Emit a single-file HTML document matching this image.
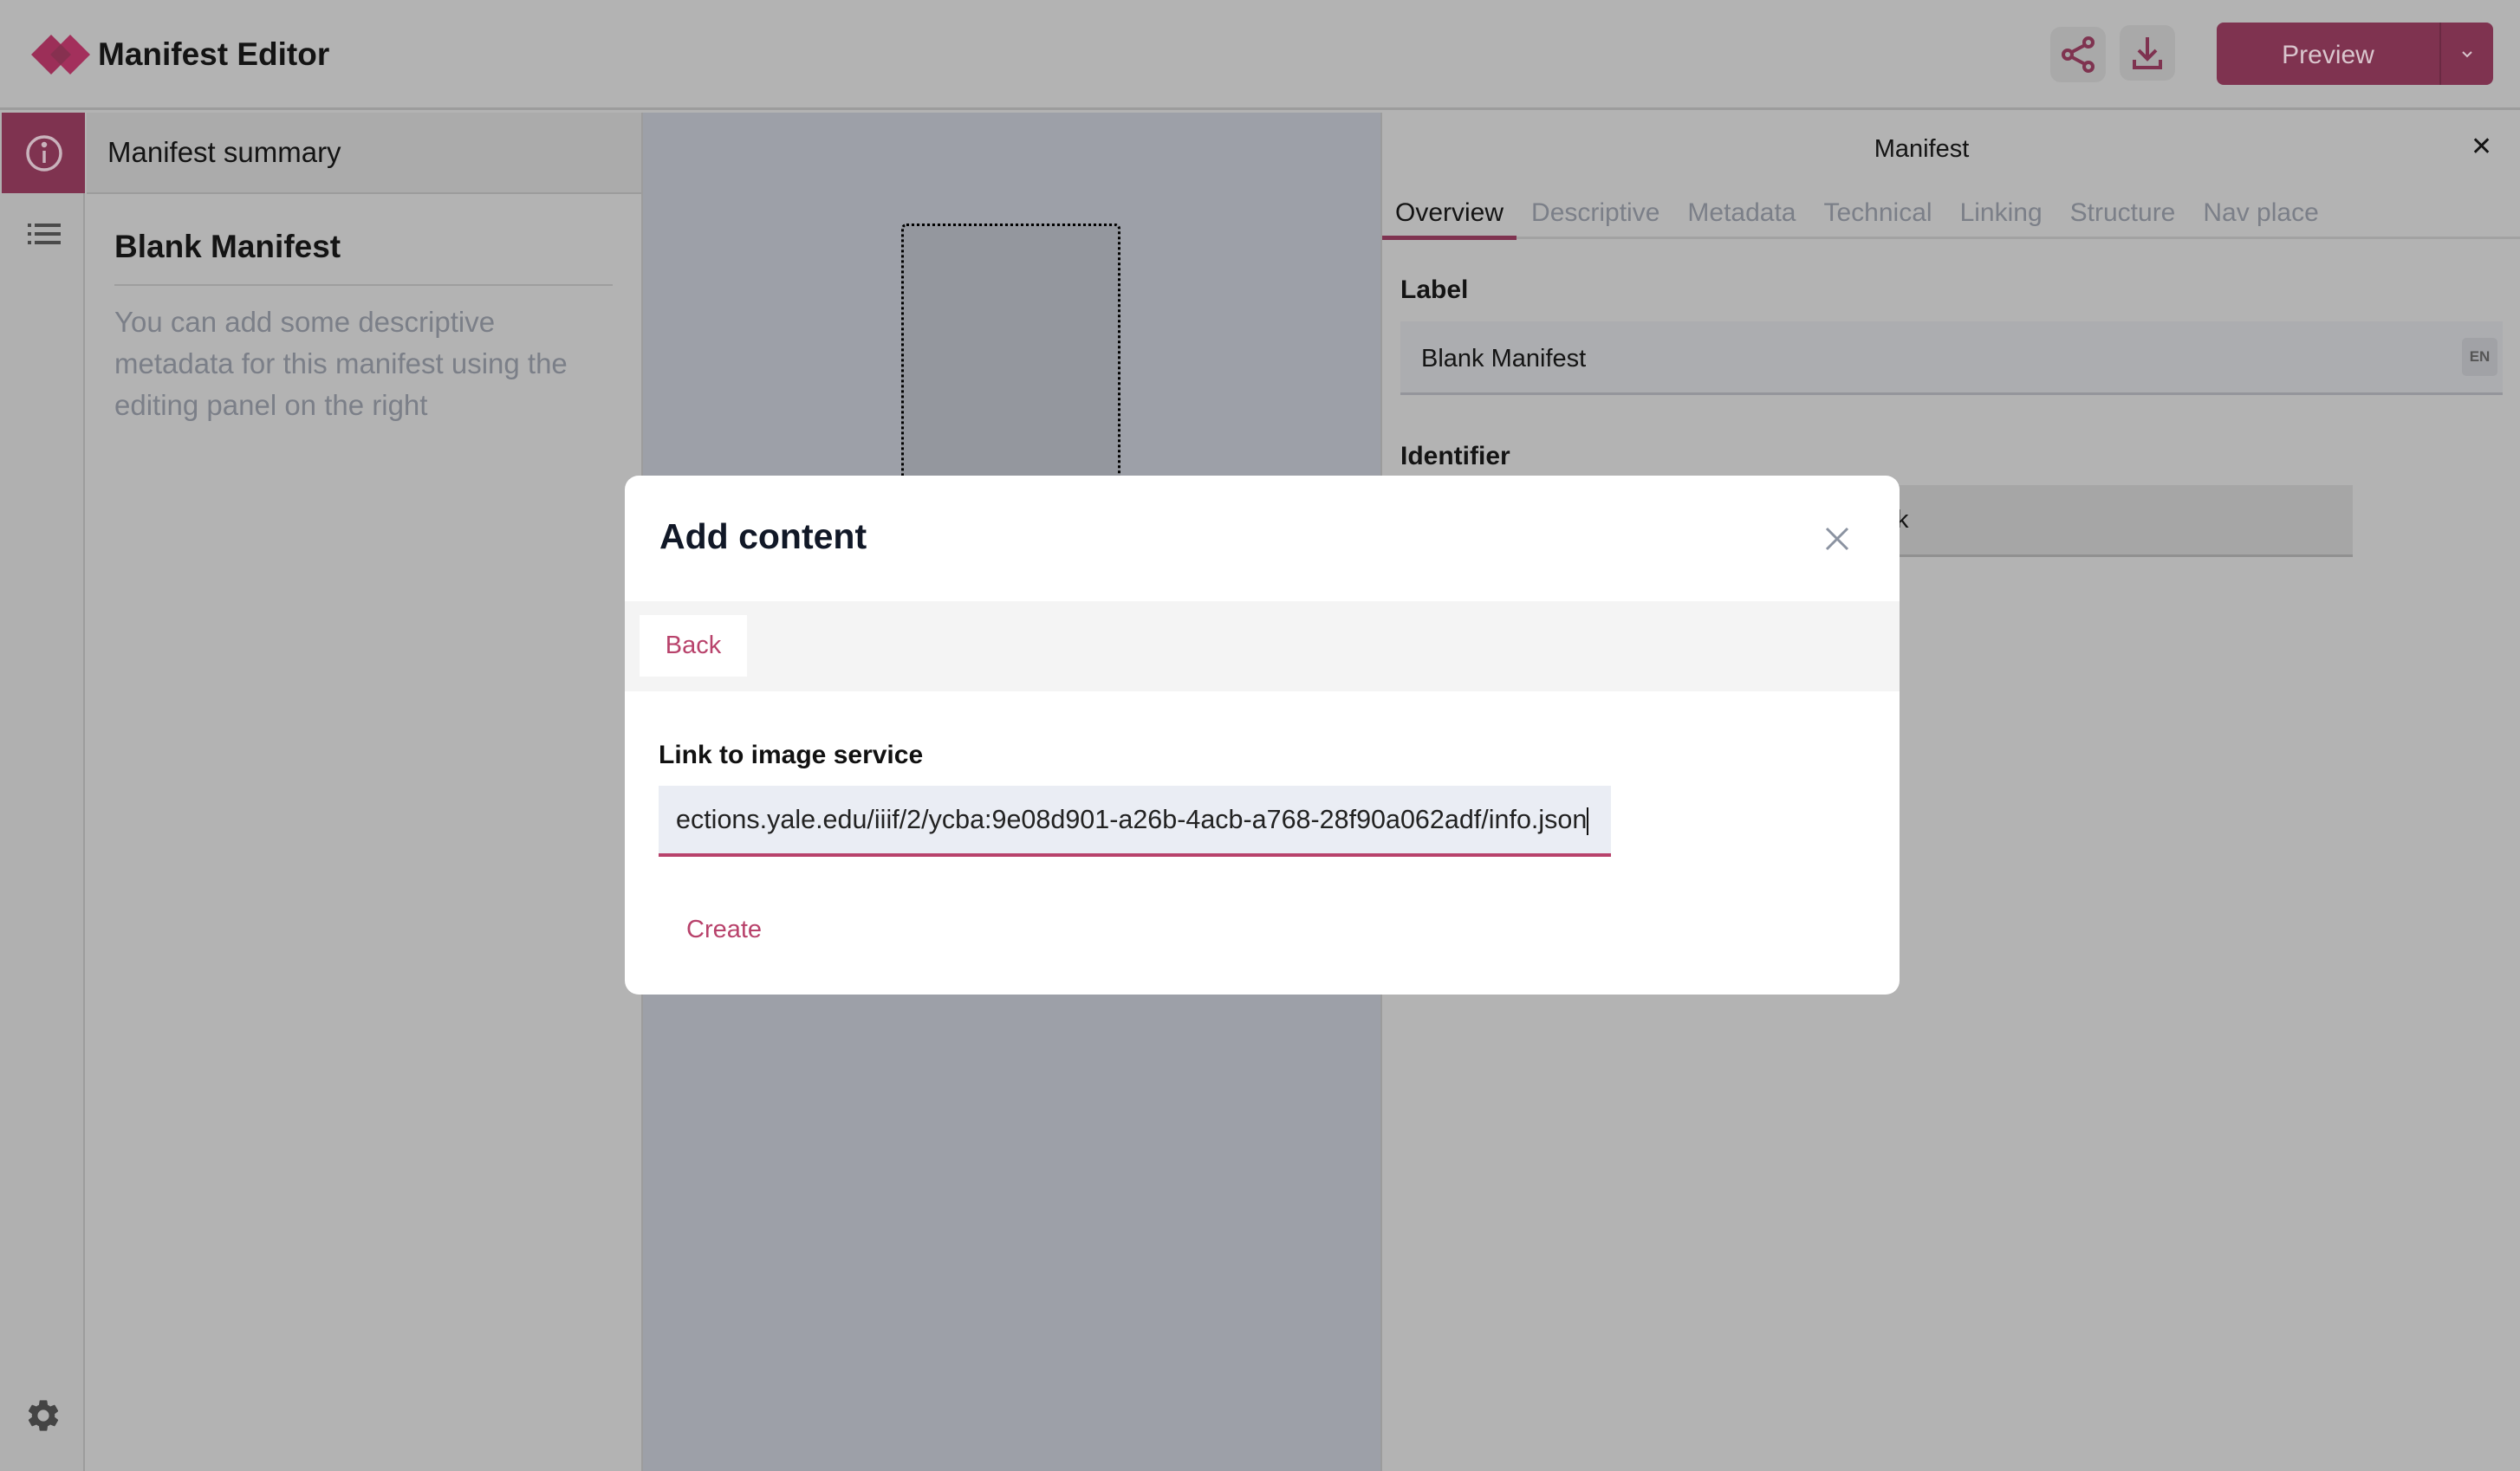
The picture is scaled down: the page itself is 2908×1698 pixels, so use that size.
<!DOCTYPE html>
<html><head><meta charset="utf-8"><style>
*{box-sizing:border-box;margin:0;padding:0}
body{width:2908px;height:1698px;overflow:hidden;background:#b3b3b3;font-family:"Liberation Sans",sans-serif;position:relative}
.a{position:absolute}
</style></head><body>
<!-- header -->
<div class="a" style="left:0;top:0;width:2908px;height:127px;background:#b3b3b3;border-bottom:3px solid #9c9c9c"></div>
<svg class="a" style="left:36px;top:40px" width="68" height="46" viewBox="0 0 68 46">
<polygon points="23,0 46,23 23,46 0,23" fill="#9c2f58"/>
<polygon points="45,0 68,23 45,46 22,23" fill="#a3305c"/>
<polygon points="34,11 46,23 34,35 22,23" fill="#873050"/>
</svg>
<div class="a" style="left:113px;top:42px;font-size:37px;font-weight:bold;color:#141414">Manifest Editor</div>
<div class="a" style="left:2366px;top:31px;width:64px;height:64px;border-radius:12px;background:#a9a9a9"></div>
<svg class="a" style="left:2366px;top:31px" width="64" height="64" viewBox="0 0 64 64" fill="none" stroke="#7f3350" stroke-width="4">
<circle cx="44" cy="18" r="5"/><circle cx="20" cy="32" r="5"/><circle cx="44" cy="46" r="5"/><path d="M25 29L40 21M25 35L40 43"/></svg>
<div class="a" style="left:2446px;top:29px;width:64px;height:64px;border-radius:12px;background:#a9a9a9"></div>
<svg class="a" style="left:2446px;top:29px" width="64" height="64" viewBox="0 0 64 64" fill="none" stroke="#7f3350" stroke-width="4">
<path d="M32 14V38M22 29L32 39L42 29M17 40V49H47V40"/></svg>
<div class="a" style="left:2558px;top:26px;width:319px;height:72px;border-radius:8px;background:#7f3350"></div>
<div class="a" style="left:2815px;top:26px;width:2px;height:72px;background:#6a2a43"></div>
<div class="a" style="left:2558px;top:28px;width:257px;height:72px;line-height:72px;text-align:center;color:#d9c5cd;font-size:30px">Preview</div>
<svg class="a" style="left:2838px;top:56px" width="18" height="14" viewBox="0 0 18 14"><path d="M4 4L9 9L14 4" fill="none" stroke="#d9c5cd" stroke-width="2"/></svg>
<!-- left rail -->
<div class="a" style="left:0;top:130px;width:98px;height:1568px;background:#b0b0b0;border-right:2px solid #9c9c9c"></div>
<div class="a" style="left:2px;top:130px;width:96px;height:93px;background:#7f3350"></div>
<svg class="a" style="left:26px;top:152px" width="50" height="50" viewBox="0 0 50 50" fill="none" stroke="#c9b3bc" stroke-width="3.5"><circle cx="25" cy="25" r="19"/><path d="M25 22V36"/><circle cx="25" cy="15" r="1.5" fill="#c9b3bc"/></svg>
<svg class="a" style="left:32px;top:256px" width="40" height="28" viewBox="0 0 40 28" fill="#4a4a4a"><rect x="0" y="2" width="4" height="4"/><rect x="8" y="2" width="30" height="4"/><rect x="0" y="12" width="4" height="4"/><rect x="8" y="12" width="30" height="4"/><rect x="0" y="22" width="4" height="4"/><rect x="8" y="22" width="30" height="4"/></svg>
<svg class="a" style="left:28px;top:1612px" width="44" height="44" viewBox="0 0 24 24"><path fill="#444" d="M19.14 12.94c.04-.3.06-.61.06-.94 0-.32-.02-.64-.07-.94l2.030-1.58a.49.49 0 0 0 .12-.61l-1.92-3.32a.49.49 0 0 0-.59-.22l-2.39.96c-.5-.38-1.03-.7-1.62-.94l-.36-2.54a.48.48 0 0 0-.48-.41h-3.84c-.24 0-.43.17-.47.41l-.36 2.54c-.59.24-1.130.57-1.62.94l-2.39-.96a.49.49 0 0 0-.59.22L2.74 8.87c-.12.21-.08.47.12.61l2.03 1.58c-.05.3-.09.63-.09.94s.02.64.07.94l-2.03 1.58a.49.49 0 0 0-.12.61l1.92 3.32c.12.22.37.29.59.22l2.39-.96c.5.38 1.03.7 1.62.94l.36 2.54c.05.24.24.41.48.41h3.84c.24 0 .44-.17.47-.41l.36-2.54c.59-.24 1.13-.56 1.62-.94l2.39.96c.22.08.47 0 .59-.22l1.92-3.32c.12-.22.07-.47-.12-.61l-2.01-1.58zM12 15.6A3.6 3.6 0 1 1 12 8.4a3.6 3.6 0 0 1 0 7.2z"/></svg>
<!-- left panel -->
<div class="a" style="left:100px;top:130px;width:640px;height:94px;background:#ababab;border-bottom:2px solid #9c9c9c"></div>
<div class="a" style="left:124px;top:157px;font-size:33px;color:#141414">Manifest summary</div>
<div class="a" style="left:740px;top:130px;width:2px;height:1568px;background:#9c9c9c"></div>
<div class="a" style="left:132px;top:264px;font-size:37px;font-weight:bold;color:#141414">Blank Manifest</div>
<div class="a" style="left:132px;top:328px;width:575px;height:2px;background:#9e9e9e"></div>
<div class="a" style="left:132px;top:348px;width:560px;font-size:33px;line-height:48px;color:#7b7f88">You can add some descriptive metadata for this manifest using the editing panel on the right</div>
<!-- center -->
<div class="a" style="left:742px;top:130px;width:851px;height:1568px;background:#9da0a8"></div>
<div class="a" style="left:1040px;top:258px;width:253px;height:400px;background:#94979e;border:3px dotted #000;border-radius:6px"></div>
<!-- right panel -->
<div class="a" style="left:1593px;top:130px;width:2px;height:1568px;background:#9c9c9c"></div>
<div class="a" style="left:1595px;top:156px;width:1245px;text-align:center;font-size:29px;color:#141414">Manifest</div>
<div class="a" style="left:2851px;top:152px;font-size:30px;color:#141414">✕</div>
<div class="a" style="left:1595px;top:229px;font-size:30px;color:#7b7f88;white-space:nowrap"><span style="color:#141414;margin-left:15px">Overview</span><span style="margin-left:32px">Descriptive</span><span style="margin-left:32px">Metadata</span><span style="margin-left:32px">Technical</span><span style="margin-left:32px">Linking</span><span style="margin-left:32px">Structure</span><span style="margin-left:32px">Nav place</span></div>
<div class="a" style="left:1595px;top:273px;width:1313px;height:3px;background:#a2a2a2"></div>
<div class="a" style="left:1595px;top:272px;width:155px;height:5px;background:#7f3350"></div>
<div class="a" style="left:1616px;top:318px;font-size:30px;font-weight:bold;color:#141414">Label</div>
<div class="a" style="left:1616px;top:371px;width:1272px;height:85px;background:#acadb0;border-bottom:3px solid #94959b"></div>
<div class="a" style="left:1640px;top:398px;font-size:29px;color:#141414">Blank Manifest</div>
<div class="a" style="left:2841px;top:390px;width:41px;height:44px;border-radius:5px;background:#a1a2a6;font-size:17px;font-weight:bold;color:#555;text-align:center;line-height:44px">EN</div>
<div class="a" style="left:1616px;top:510px;font-size:30px;font-weight:bold;color:#141414">Identifier</div>
<div class="a" style="left:1616px;top:560px;width:1099px;height:83px;background:#a6a6a6;border-bottom:3px solid #909090"></div>
<div class="a" style="left:2188px;top:584px;font-size:29px;color:#141414">k</div>
<!-- modal -->
<div class="a" style="left:721px;top:549px;width:1471px;height:599px;background:#fff;border-radius:16px;overflow:hidden">
<div class="a" style="left:40px;top:47px;font-size:41px;font-weight:bold;color:#111827">Add content</div>
<svg class="a" style="left:1382px;top:56px" width="34" height="34" viewBox="0 0 34 34"><path d="M5 5L29 29M29 5L5 29" stroke="#8b93a1" stroke-width="3"/></svg>
<div class="a" style="left:0;top:145px;width:1471px;height:104px;background:#f4f4f4"></div>
<div class="a" style="left:17px;top:161px;width:124px;height:71px;background:#fff;color:#b8426b;font-size:29px;line-height:71px;text-align:center">Back</div>
<div class="a" style="left:39px;top:306px;font-size:30px;font-weight:bold;color:#111">Link to image service</div>
<div class="a" style="left:39px;top:358px;width:1099px;height:82px;background:#eaedf4;border-bottom:4px solid #b8426b;overflow:hidden">
<div class="a" style="left:20px;top:22px;font-size:30.5px;color:#222;white-space:nowrap">ections.yale.edu/iiif/2/ycba:9e08d901-a26b-4acb-a768-28f90a062adf/info.json<span style="display:inline-block;width:2px;height:32px;background:#111;vertical-align:middle"></span></div>
</div>
<div class="a" style="left:71px;top:508px;font-size:29px;color:#b8426b">Create</div>
</div>
</body></html>
